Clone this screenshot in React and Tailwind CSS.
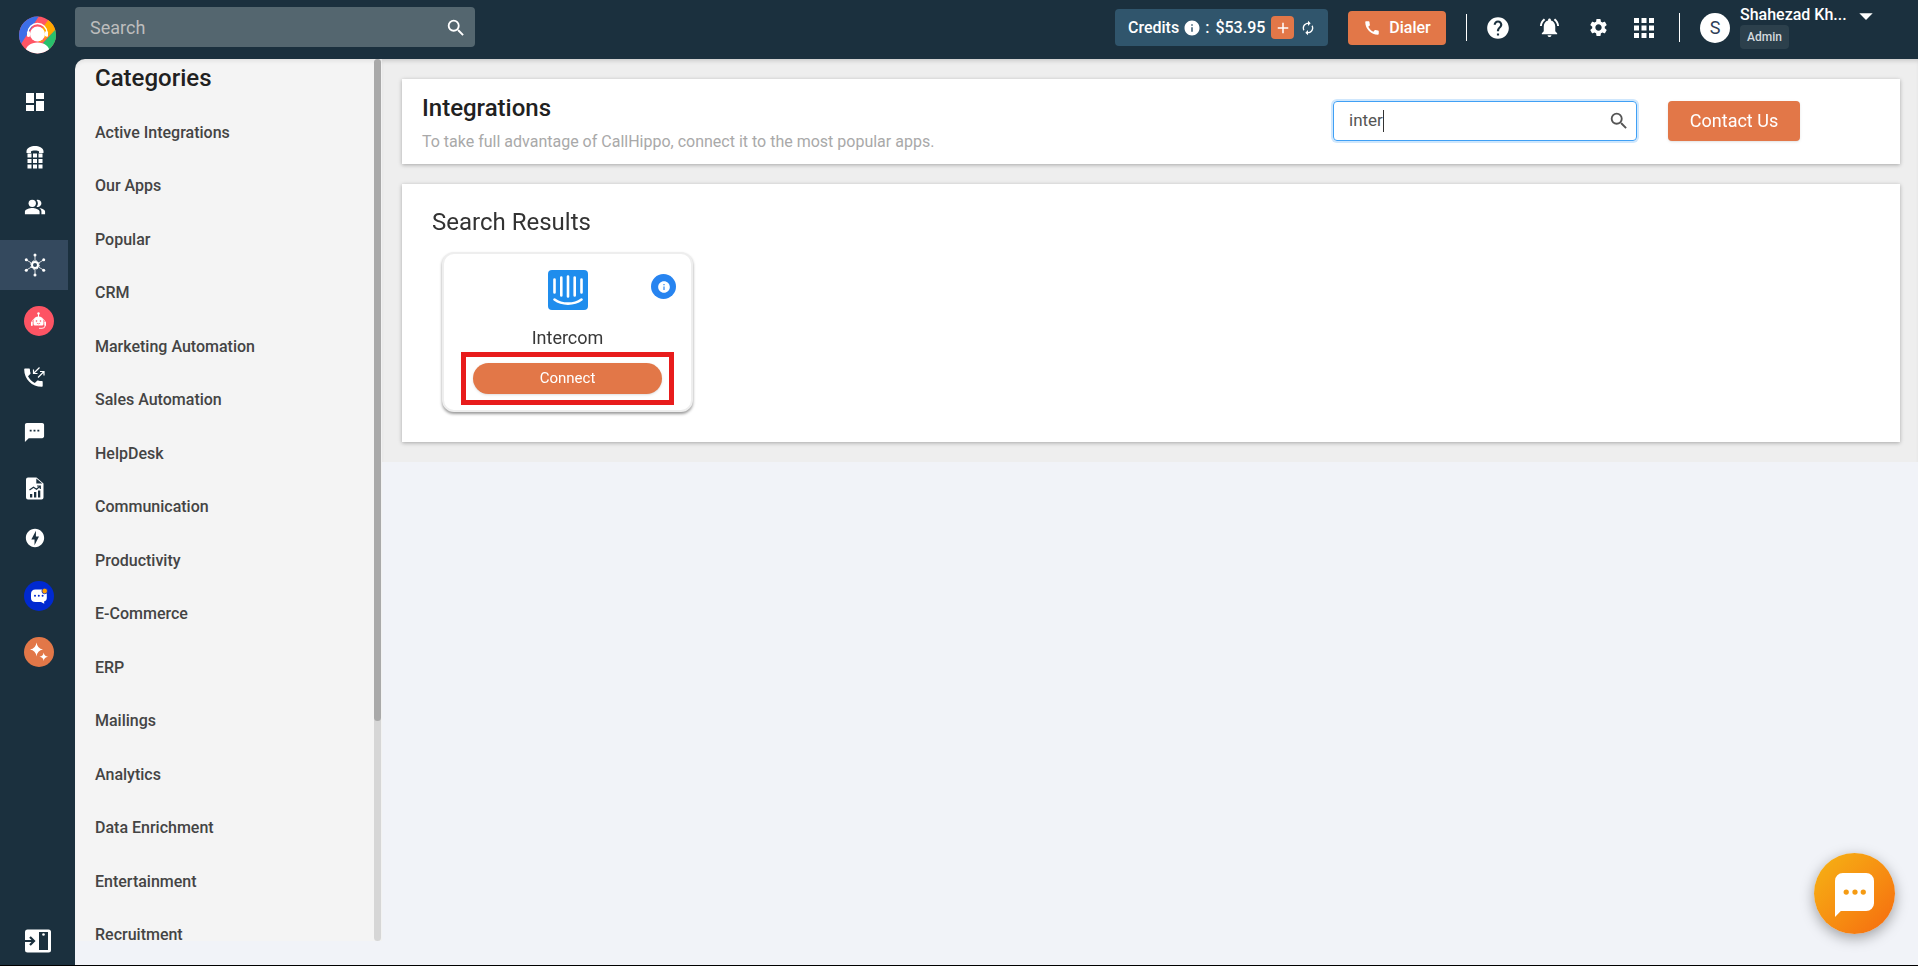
import React from 'react';
import clsx from 'clsx';
import {
  MdAdd,
  MdApps,
  MdArrowDropDown,
  MdAutorenew,
  MdCall,
  MdDashboard,
  MdHelp,
  MdInfo,
  MdNotificationsActive,
  MdOfflineBolt,
  MdPeopleAlt,
  MdSearch,
  MdSettings,
  MdTextsms,
} from 'react-icons/md';

const categories = [
  'Active Integrations',
  'Our Apps',
  'Popular',
  'CRM',
  'Marketing Automation',
  'Sales Automation',
  'HelpDesk',
  'Communication',
  'Productivity',
  'E-Commerce',
  'ERP',
  'Mailings',
  'Analytics',
  'Data Enrichment',
  'Entertainment',
  'Recruitment',
];

function BrandLogo() {
  return (
    <svg width="37" height="38" viewBox="0 0 37 38">
      <defs>
        <clipPath id="brand">
          <circle cx="18.5" cy="19" r="18.5" />
        </clipPath>
      </defs>
      <g clipPath="url(#brand)">
        <rect width="37" height="38" fill="#ff5565" />
        <path d="M0 0H20L2 28H0Z" fill="#3c6fe8" />
        <path d="M30 3L37 8V14L26 23L22 14Z" fill="#ffa800" />
        <path d="M37 13L24 27L31 38H37Z" fill="#28c06c" />
        <path d="M6 38C6 30 12 26.500 18.500 26.500S31 30 31 38Z" fill="#fff" />
        <path d="M9 20V17a9.500 9.500 0 0 1 19 0v3" fill="none" stroke="#fff" strokeWidth="1.500" />
        <rect x="8" y="15" width="3" height="6" rx="1.500" fill="#fff" />
        <rect x="26" y="15" width="3" height="6" rx="1.500" fill="#fff" />
        <circle cx="18.500" cy="18" r="7.500" fill="#fff" />
        <path d="M27 20Q26 26 20 25.500" fill="none" stroke="#ffa800" strokeWidth="1" />
      </g>
    </svg>
  );
}

function DeskPhoneIcon() {
  return (
    <svg width="18" height="23" viewBox="0 0 18 23" fill="currentColor">
      <path d="M0.500 7V5C1 1.500 5 0 9 0s8 1.500 8.500 5v2h-4.500V5.500C12 4.200 6 4.200 5 5.500V7Z" />
      {[7.5, 13, 18.5].map((y) =>
        [1.500, 7, 12.500].map((x) => <rect key={`${x}-${y}`} x={x} y={y} width="4" height="4" />)
      )}
    </svg>
  );
}

function HubIcon() {
  return (
    <svg width="22" height="24" viewBox="0 0 22 24" fill="none" stroke="currentColor">
      <circle cx="11" cy="12" r="3" strokeWidth="2" />
      <circle cx="11" cy="12" r="4.300" strokeWidth="1" strokeDasharray="1.700 1.700" />
      <path d="M11 2v6M11 16v6M2.500 7l5 3M14.500 14l5 3M19.500 7l-5 3M7.500 14l-5 3" strokeWidth="0.800" />
      <g fill="currentColor" stroke="none">
        <circle cx="11" cy="2" r="1.500" />
        <circle cx="11" cy="22" r="1.500" />
        <circle cx="2.300" cy="6.800" r="1.500" />
        <circle cx="19.700" cy="6.800" r="1.500" />
        <circle cx="2.300" cy="17.200" r="1.500" />
        <circle cx="19.700" cy="17.200" r="1.500" />
      </g>
    </svg>
  );
}

function BotIcon() {
  return (
    <svg width="30" height="30" viewBox="0 0 30 30" fill="#fff">
      <circle cx="15" cy="15" r="15" fill="#fd5464" />
      <circle cx="14.500" cy="7.500" r="1.200" />
      <path d="M14 7h1v5h-1Z" />
      <path d="M9.500 18v-2.500a5 5 0 0 1 10 0V18a1.500 1.500 0 0 1-1.500 1.500h-7A1.500 1.500 0 0 1 9.500 18Z" />
      <path d="M8.300 15.500a6.500 6 0 0 1 12.400 0" fill="none" stroke="#fff" strokeWidth="0.800" />
      <rect x="7" y="15.500" width="1.700" height="4.500" rx="0.800" />
      <rect x="20.300" y="15.500" width="1.700" height="4.500" rx="0.800" />
      <path d="M21 20q0 2.300-3 2.300h-3" fill="none" stroke="#fff" strokeWidth="0.900" />
      <circle cx="12.500" cy="15" r="0.800" fill="#fd5464" />
      <circle cx="16.500" cy="15" r="0.800" fill="#fd5464" />
      <path d="M12.800 17.200q1.700 1.300 3.400 0" fill="none" stroke="#fd5464" strokeWidth="0.700" />
    </svg>
  );
}

function CallLogIcon() {
  return (
    <svg width="21" height="20" viewBox="0 0 21 20" fill="currentColor">
      <path d="M4 9.200c1.500 3 3.900 5.300 6.800 6.800l2.300-2.300c.3-.3.700-.4 1-.2 1.100.4 2.400.6 3.600.6.600 0 1 .4 1 1v3.700c0 .6-.4 1-1 1C8 19.800.2 12 .2 2.400c0-.6.400-1 1-1h3.700c.6 0 1 .4 1 1 0 1.200.2 2.500.6 3.600.1.300 0 .7-.2 1Z" />
      <path d="M15.500.5L9.500 6.500M9.500 2.500v4h4M14 10.500l6-6M16 4.500h4v4" fill="none" stroke="currentColor" strokeWidth="1.200" />
    </svg>
  );
}

function ReportIcon() {
  return (
    <svg width="18" height="23" viewBox="0 0 18 23">
      <path d="M2 .5h8.500L17.500 6.500V20.500a2 2 0 0 1-2 2H2a2 2 0 0 1-2-2V2.500a2 2 0 0 1 2-2Z" fill="currentColor" />
      <path d="M10.300 1.500v5h6Z" fill="#1b303e" />
      <path d="M3.500 13l4-2.800 3 2L14 9.200M11 9h3.300v3" fill="none" stroke="#1b303e" strokeWidth="1.200" />
      <path d="M4 17h2.300v3.500H4ZM8 15h2.300v5.500H8ZM12 13.500h2.300v7H12Z" fill="#1b303e" />
    </svg>
  );
}

function BlueChatIcon() {
  return (
    <svg width="30" height="30" viewBox="0 0 30 30">
      <circle cx="15" cy="15" r="15" fill="#0029d0" />
      <path d="M11.500 8.500h7c3 0 4.300 1.500 4.300 4.500v4c0 1.800-1 3-2.800 3.500l.3 2.200-3.300-1.700h-5.500c-3 0-4.500-1.500-4.500-4v-4c0-3 1.500-4.500 4.500-4.500Z" fill="#fff" />
      <circle cx="20.700" cy="10" r="2.800" fill="#ffa000" stroke="#0029d0" strokeWidth="0.800" />
      <circle cx="11" cy="14.700" r="1" fill="#0029d0" />
      <circle cx="14.800" cy="14.700" r="1" fill="#0029d0" />
      <circle cx="18.600" cy="14.700" r="1" fill="#0029d0" />
    </svg>
  );
}

function SparkleIcon() {
  return (
    <svg width="30" height="30" viewBox="0 0 30 30" fill="#fff">
      <circle cx="15" cy="15" r="15" fill="#e27748" />
      <path d="M12.500 5.500Q13.300 11.700 19 12.500Q13.300 13.300 12.500 19.500Q11.700 13.300 6 12.500Q11.700 11.700 12.500 5.500Z" />
      <path d="M19.700 15.500Q20.200 19.300 24 19.700Q20.200 20.200 19.700 24Q19.200 20.200 15.500 19.700Q19.200 19.300 19.700 15.500Z" />
    </svg>
  );
}

function ExpandIcon() {
  return (
    <svg width="26" height="24" viewBox="0 0 26 24">
      <rect x="0" y="0.500" width="26" height="23" rx="2.500" fill="currentColor" />
      <rect x="14" y="3" width="9" height="18" fill="#1b303e" />
      <circle cx="18.500" cy="5.500" r="1.300" fill="currentColor" />
      <path d="M0 12h9M5 8l4 4-4 4" fill="none" stroke="#1b303e" strokeWidth="2.200" />
    </svg>
  );
}

function IntercomLogo() {
  return (
    <svg width="40" height="40" viewBox="0 0 40 40">
      <rect width="40" height="40" rx="4" fill="#1f8ded" />
      <path
        d="M6.500 9.500v13M13.300 7.500v18M20 6.500v20M26.700 7.500v18M33.500 9.500v13M6.500 29.500c7.500 5.500 19.500 5.500 27 0"
        fill="none"
        stroke="#fff"
        strokeWidth="2.600"
        strokeLinecap="round"
      />
    </svg>
  );
}

const navItems = [
  { name: 'Dashboard', icon: <MdDashboard size={24} />, space: 'mt-0' },
  { name: 'Numbers', icon: <DeskPhoneIcon />, space: 'mt-[5px]' },
  { name: 'Teams', icon: <MdPeopleAlt size={22} />, space: 'mt-0' },
  { name: 'Integrations', icon: <HubIcon />, space: 'mt-2', active: true },
  { name: 'AI Bot', icon: <BotIcon />, space: 'mt-1.5', badge: true },
  { name: 'Call Logs', icon: <CallLogIcon />, space: 'mt-1.5' },
  { name: 'Messages', icon: <MdTextsms size={23} />, space: 'mt-[5px]' },
  { name: 'Reports', icon: <ReportIcon />, space: 'mt-1.5' },
  { name: 'Power Dialer', icon: <MdOfflineBolt size={22} />, space: 'mt-0' },
  { name: 'Live Chat', icon: <BlueChatIcon />, space: 'mt-2', badge: true },
  { name: 'AI Features', icon: <SparkleIcon />, space: 'mt-1.5', badge: true },
];

function Sidebar() {
  return (
    <aside className="flex w-[75px] shrink-0 flex-col bg-[#1b303e] pt-4 pb-3 text-white">
      <a href="#home" aria-label="Home" className="ml-[19px]">
        <BrandLogo />
      </a>
      <nav className="mt-[23px] flex flex-col">
        {navItems.map((item) => (
          <a
            key={item.name}
            href="#nav"
            aria-label={item.name}
            className={clsx(
              'flex h-[50px] w-[68px] items-center justify-center',
              item.space,
              item.badge ? 'pl-2.5' : 'pl-px',
              item.active && 'bg-[#34495e]'
            )}
          >
            {item.icon}
          </a>
        ))}
      </nav>
      <button type="button" aria-label="Expand menu" className="mt-auto ml-[25px] self-start">
        <ExpandIcon />
      </button>
    </aside>
  );
}

function Header() {
  return (
    <header className="relative z-10 flex h-[59px] shrink-0 items-start bg-[#1b303e] pr-9 text-white">
      <form className="mt-[7px] flex h-10 w-[400px] items-center rounded bg-[#54666f] pr-2 pl-[15px]">
        <input
          type="text"
          aria-label="Search"
          placeholder="Search"
          className="min-w-0 flex-1 bg-transparent pt-0.5 text-lg outline-none placeholder:text-[#bdbdbd]"
        />
        <button type="button" aria-label="Run search" className="pt-0.5">
          <MdSearch size={22} />
        </button>
      </form>

      <div className="ml-auto flex h-[55px] items-center">
        <div className="flex h-[37px] w-[213px] items-center rounded bg-[#30556c] pl-[13px] text-base font-medium">
          <span>Credits</span>
          <MdInfo size={18} className="ml-1" />
          <span className="ml-1">:</span>
          <span className="ml-1.5">$53.95</span>
          <button type="button" aria-label="Add credits" className="ml-1.5 flex h-[23px] w-[23px] items-center justify-center rounded bg-[#e27748]">
            <MdAdd size={18} />
          </button>
          <button type="button" aria-label="Refresh credits" className="ml-1.5">
            <MdAutorenew size={16} />
          </button>
        </div>
        <button type="button" className="ml-5 flex h-[34px] w-[98px] items-center justify-center gap-2 rounded bg-[#e27748] text-base font-medium">
          <MdCall size={18} />
          Dialer
        </button>
        <span className="ml-5 h-[27px] w-px bg-white" />
        <button type="button" aria-label="Help" className="ml-[18px]">
          <MdHelp size={26} />
        </button>
        <button type="button" aria-label="Notifications" className="ml-[27px]">
          <MdNotificationsActive size={23} />
        </button>
        <button type="button" aria-label="Settings" className="ml-[27px]">
          <MdSettings size={21} />
        </button>
        <button type="button" aria-label="Apps" className="ml-5">
          <MdApps size={30} />
        </button>
        <span className="ml-5 h-[29px] w-px bg-white" />
        <span className="ml-5 flex h-[30px] w-[30px] items-center justify-center rounded-full bg-white text-lg text-[#2e4057]">S</span>
        <div className="ml-2.5 flex w-[110px] flex-col items-start pb-0.5">
          <span className="text-base leading-5 font-medium">Shahezad Kh...</span>
          <span className="flex h-6 items-center rounded bg-[#2c404c] px-[7px] text-xs font-medium text-[#d5dade]">Admin</span>
        </div>
        <button type="button" aria-label="Account menu" className="mb-6">
          <MdArrowDropDown size={32} />
        </button>
      </div>
    </header>
  );
}

function CategoryPanel() {
  return (
    <section className="mb-6 flex w-[307px] shrink-0 rounded-tl-[10px] bg-[#f4f4f4] shadow-[inset_0_4px_4px_-2px_rgba(0,0,0,0.08)]">
      <div className="min-w-0 flex-1 pl-5">
        <h2 className="pt-[3px] text-2xl leading-8 font-medium text-[#212121]">Categories</h2>
        <ul className="mt-3 grid h-[856px] grid-rows-16">
          {categories.map((name) => (
            <li key={name} className="flex items-center">
              <a href="#category" className="text-base font-medium text-[#444444]">
                {name}
              </a>
            </li>
          ))}
        </ul>
      </div>
      <div className="mr-px w-[7px] rounded-full bg-[#d6d6d6]">
        <div className="h-3/4 w-full rounded-full bg-[#a9a9a9]" />
      </div>
    </section>
  );
}

function IntegrationCard() {
  return (
    <article className="relative flex h-[160px] w-[251px] flex-col items-center rounded-xl border-2 border-[#eeeeee] bg-white pt-4 shadow-[0_2px_3px_rgba(0,0,0,0.4)]">
      <IntercomLogo />
      <button
        type="button"
        aria-label="About Intercom"
        className="absolute top-5 right-[15px] flex h-[25px] w-[25px] items-center justify-center rounded-full bg-[#2784f0] text-white"
      >
        <MdInfo size={14} />
      </button>
      <h4 className="mt-3.5 text-lg leading-7 text-[#383838]">Intercom</h4>
      <div className="flex h-[53px] w-[213px] items-center justify-center border-5 border-[#e81c1c]">
        <button type="button" className="h-[31px] w-[189px] rounded-full bg-[#e27748] text-[15px] text-white shadow-sm">
          Connect
        </button>
      </div>
    </article>
  );
}

export default function App() {
  return (
    <div className="flex h-screen overflow-hidden border-b border-black bg-[#f1f3f8] font-['Roboto',sans-serif]">
      <Sidebar />
      <div className="flex min-w-0 flex-1 flex-col">
        <Header />
        <div className="flex min-h-0 flex-1 bg-[linear-gradient(#1b303e_12px,#f1f3f8_12px)]">
          <CategoryPanel />
          <main className="min-w-0 flex-1 bg-[#f1f3f8]">
            <div className="flex flex-col gap-5 bg-[#eeeeee] py-5 pr-[18px] pl-5 shadow-[inset_0_4px_4px_-2px_rgba(0,0,0,0.15)]">
              <section className="flex h-[85px] items-center bg-white pr-[100px] pb-px pl-5 shadow-[0_1px_4px_rgba(0,0,0,0.3)]">
                <div className="pt-1">
                  <h1 className="text-2xl leading-9 font-medium text-[#212121]">Integrations</h1>
                  <p className="mt-0.5 text-base leading-7 text-[#a9a9a9]">
                    To take full advantage of CallHippo, connect it to the most popular apps.
                  </p>
                </div>
                <form className="ml-auto flex h-10 w-[304px] items-center rounded border border-[#40a0f5] pr-1.5 pl-[15px] shadow-[0_0_0_2px_#cfe7fd]">
                  <input
                    type="text"
                    aria-label="Search integrations"
                    defaultValue="inter"
                    autoFocus
                    className="field-sizing-content text-[17px] text-[#555555] caret-transparent outline-none"
                  />
                  <span className="h-[22px] w-px bg-[#333333]" />
                  <button type="button" aria-label="Find" className="ml-auto text-[#555555]">
                    <MdSearch size={22} />
                  </button>
                </form>
                <button type="button" className="ml-[31px] h-10 w-[132px] rounded bg-[#e27748] text-lg text-white shadow-sm">
                  Contact Us
                </button>
              </section>

              <section className="bg-white px-[30px] pt-5 pb-[30px] shadow-[0_1px_4px_rgba(0,0,0,0.3)]">
                <h3 className="text-2xl leading-9 text-[#333333]">Search Results</h3>
                <div className="mt-3 pl-2.5">
                  <IntegrationCard />
                </div>
              </section>
            </div>
          </main>
        </div>
      </div>

      <button
        type="button"
        aria-label="Open chat"
        className="fixed right-[23px] bottom-8 flex h-[81px] w-[81px] items-center justify-center rounded-full bg-linear-135 from-[#f5b414] to-[#f5690f] pt-1 shadow-[0_4px_14px_rgba(0,0,0,0.35)]"
      >
        <svg width="39" height="45" viewBox="0 0 40 46">
          <path d="M8 0H32a8 8 0 0 1 8 8V31a8 8 0 0 1-8 8H6L0 45V8A8 8 0 0 1 8 0Z" fill="#fff" />
          <circle cx="11.500" cy="19.500" r="2.700" fill="#f59b13" />
          <circle cx="20.500" cy="19.500" r="2.700" fill="#f59b13" />
          <circle cx="29" cy="19.500" r="2.700" fill="#f59b13" />
        </svg>
      </button>
    </div>
  );
}
